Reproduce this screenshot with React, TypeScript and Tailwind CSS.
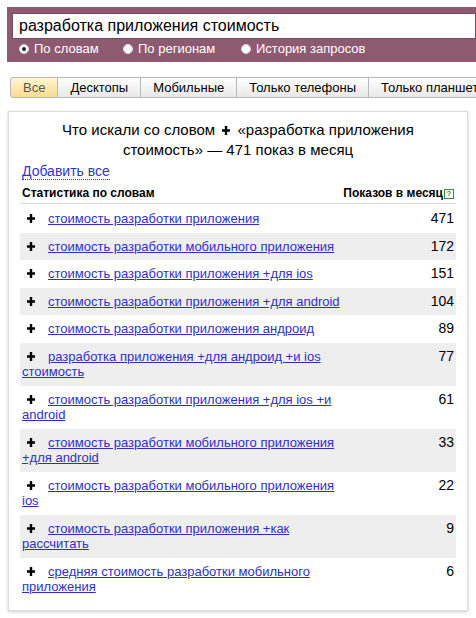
import type { ReactNode } from "react";

const rows = [
  { text: "стоимость разработки приложения", count: 471 },
  { text: "стоимость разработки мобильного приложения", count: 172 },
  { text: "стоимость разработки приложения +для ios", count: 151 },
  { text: "стоимость разработки приложения +для android", count: 104 },
  { text: "стоимость разработки приложения андроид", count: 89 },
  { text: "разработка приложения +для андроид +и ios стоимость", count: 77 },
  { text: "стоимость разработки приложения +для ios +и android", count: 61 },
  { text: "стоимость разработки мобильного приложения +для android", count: 33 },
  { text: "стоимость разработки мобильного приложения ios", count: 22 },
  { text: "стоимость разработки приложения +как рассчитать", count: 9 },
  { text: "средняя стоимость разработки мобильного приложения", count: 6 }
];

const tabs = ["Все", "Десктопы", "Мобильные", "Только телефоны", "Только планшеты"];

function Plus({ className = "" }: { className?: string }) {
  return (
    <svg width="8" height="9" viewBox="0 0 8 9" className={`inline-block ${className}`}>
      <path d="M2.8 0h2.4v3.3H8v2.4H5.2V9H2.8V5.7H0V3.3h2.8z" fill="#000" />
    </svg>
  );
}

function Radio({ checked, children }: { checked?: boolean; children: ReactNode }) {
  return (
    <span className="flex items-center gap-[5px]">
      <span className="grid h-[10px] w-[10px] place-items-center rounded-full border border-[#d8d8d8] bg-white">
        {checked && <span className="h-[4px] w-[4px] rounded-full bg-[#222]" />}
      </span>
      {children}
    </span>
  );
}

export default function App() {
  return (
    <div className="h-[618px] w-[476px] overflow-hidden bg-white font-['Liberation_Sans',Arial,sans-serif] text-black">
      <div className="ml-[7px] mt-[7px] bg-[#8e5a6f] pb-[4px] pl-[5px] pt-[6px]">
        <div className="h-[26px] border border-[#7a4a5c] bg-white pl-[6px] text-[16px] leading-[24px]">разработка приложения стоимость</div>
        <div className="flex h-[19px] items-center pl-[7px] text-[13px] text-white">
          <span className="w-[104px]"><Radio checked>По словам</Radio></span>
          <span className="w-[118px]"><Radio>По регионам</Radio></span>
          <Radio>История запросов</Radio>
        </div>
      </div>

      <div className="ml-[10px] mt-[15px] flex whitespace-nowrap text-[13px]">
        {tabs.map((t, i) => (
          <div
            key={t}
            className={`h-[21px] border border-[#b8b8b8] px-[12px] leading-[19px] ${i > 0 ? "border-l-0 bg-[linear-gradient(#ffffff,#e8e8e8)] text-black" : "rounded-l-[3px] bg-[linear-gradient(#fff6d2,#f9dc8e)] text-[#555]"}`}
          >
            {t}
          </div>
        ))}
      </div>

      <div className="ml-[8px] mt-[13px] w-[460px] border border-[#dcdcdc] bg-white px-[11px] pb-[9px] pt-[8px] shadow-[0_1px_3px_rgba(0,0,0,0.2)]">
        <h1 className="px-[30px] text-center text-[15px] leading-[20px]">
          Что искали со словом <Plus className="mx-[3px] align-[0px]" /> «разработка приложения стоимость» — 471 показ в месяц
        </h1>
        <div className="mt-[2px] pl-[2px] text-[14px] leading-[18px]">
          <span className="border-b border-dotted border-[#3333cc] text-[#3333cc]">Добавить все</span>
        </div>
        <div className="mt-[6px] flex items-end justify-between border-b border-[#d5d5dd] pb-[2px] pl-[2px] pr-[2px] text-[12px] font-bold leading-[15px]">
          <span>Статистика по словам</span>
          <span className="flex items-center">
            Показов в месяц
            <span className="ml-[1px] grid h-[10px] w-[10px] place-items-center border border-[#3d8a3d] text-[8px] leading-none text-[#3d8a3d]">?</span>
          </span>
        </div>
        <div className="mt-[1px]">
          {rows.map((r, i) => (
            <div key={r.text} className={`flex items-start justify-between pb-[6px] pl-[2px] pr-[2px] pt-[6px] ${i % 2 === 1 ? "bg-[#eeeeee]" : ""}`}>
              <div className="w-[330px] text-[13px] leading-[15.5px]">
                <Plus className="ml-[5px] mr-[13px] align-[0px]" />
                <a className="text-[#2f2fc8] underline decoration-[#2f2fc8]">{r.text}</a>
              </div>
              <span className="text-[14px] leading-[14px]">{r.count}</span>
            </div>
          ))}
        </div>
      </div>
    </div>
  );
}
